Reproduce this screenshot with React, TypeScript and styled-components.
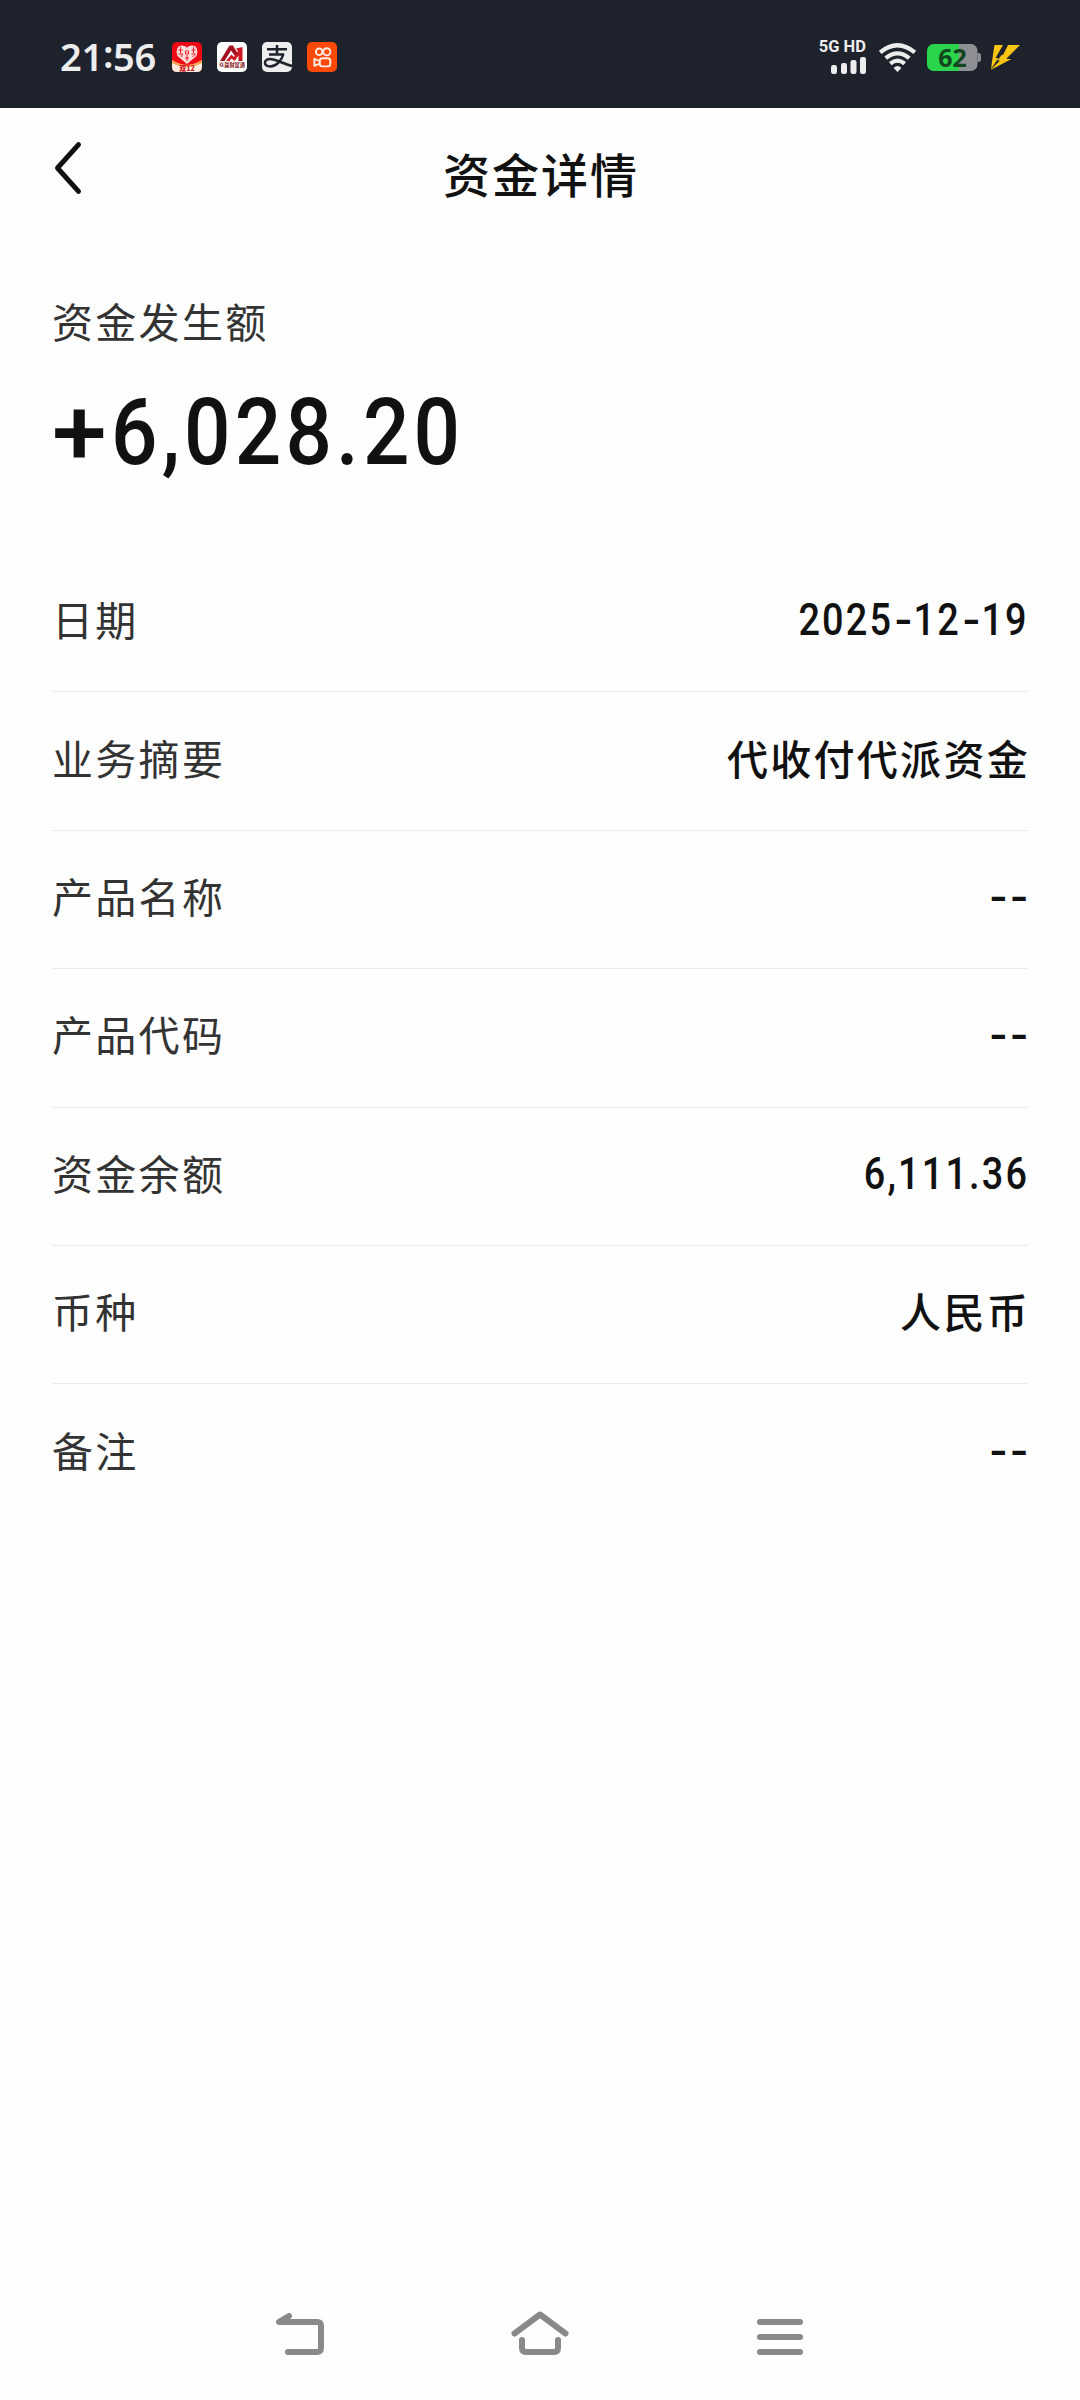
import React from 'react';
import styled, { createGlobalStyle } from 'styled-components';

const GlobalStyle = createGlobalStyle`
  * { box-sizing: border-box; }
  body { margin: 0; background: #fefefe; }
`;

const cjk = `'Noto Sans CJK SC', sans-serif`;
const digits = `Roboto, 'Noto Sans CJK SC', sans-serif`;

const Screen = styled.div`
  width: 1080px;
  height: 2400px;
  display: flex;
  flex-direction: column;
  background: #fefefe;
  color: #111;
  font-family: ${cjk};
  overflow: hidden;
`;

const StatusBar = styled.header`
  height: 108px;
  flex: none;
  display: flex;
  align-items: center;
  justify-content: space-between;
  padding: 6px 60px 0 60px;
  background: #1e222d;
`;

const StatusGroup = styled.div`
  display: flex;
  align-items: center;
  gap: 15px;
`;

const SystemGroup = styled.div`
  display: grid;
  grid-template-columns: 52px 39px 54px 30px;
  column-gap: 9px;
  align-items: center;
  justify-items: start;
`;

const Clock = styled.time`
  width: 97px;
  font: 600 38px/40px 'Noto Sans', sans-serif;
  letter-spacing: -0.3px;
  color: #ededed;
  white-space: nowrap;
  display: flex;
  padding-bottom: 2px;
`;

const Colon = styled.span`
  margin-top: -3px;
`;

const Icon = styled.svg`
  display: block;
  flex: none;
  overflow: visible;
`;

const Network = styled.div`
  display: flex;
  flex-direction: column;
  align-items: flex-end;
  gap: 3px;
  width: 48px;
`;

const NetworkLabel = styled.span`
  font: 700 16.5px/14px Roboto, sans-serif;
  color: #ededed;
  white-space: nowrap;
`;

const TitleBar = styled.div`
  flex: none;
  height: 142px;
  display: grid;
  grid-template-columns: 120px 1fr 120px;
  align-items: start;
`;

const BackButton = styled.button`
  border: 0;
  background: none;
  padding: 34px 0 0 54px;
`;

const Title = styled.h1`
  margin: 31px 0 0;
  text-align: center;
  font: 500 47px/68px ${cjk};
  letter-spacing: 2px;
  text-indent: 2px;
`;

const Summary = styled.section`
  flex: none;
  height: 304px;
  padding: 40px 52px 0;
`;

const Caption = styled.div`
  font-size: 41px;
  line-height: 60px;
  letter-spacing: 2.3px;
  color: #333;
`;

const Amount = styled.div`
  display: flex;
  margin-top: 28px;
  font: 500 93px/110px ${digits};
`;

const Sign = styled.span`
  width: 59px;
  transform: scaleX(1.06);
  transform-origin: left center;
`;

const AmountDigits = styled.span`
  letter-spacing: 4.7px;
  transform: scaleX(0.88);
  transform-origin: left center;
`;

const List = styled.dl`
  flex: 1;
  margin: 0;
  padding: 0 52px;
`;

const Row = styled.div`
  height: 138.4px;
  display: flex;
  align-items: center;
  justify-content: space-between;
  border-bottom: 1px solid #ebebeb;
  &:last-child { border-bottom: 0; }
`;

const Label = styled.dt`
  font-size: 41px;
  line-height: 60px;
  letter-spacing: 2.3px;
  color: #333;
  padding-bottom: 9px;
`;

const TextValue = styled.dd`
  margin: 0 -2px 0 0;
  font-weight: 500;
  font-size: 41px;
  line-height: 60px;
  letter-spacing: 2.3px;
  padding-bottom: 9px;
`;

const NumericValue = styled.dd`
  margin: 0 -1px 0 0;
  display: flex;
  font: 500 43.5px/60px ${digits};
  letter-spacing: 2.5px;
  padding-bottom: 3px;
  transform: scaleX(0.87);
  transform-origin: right center;
`;

const Dash = styled.span`
  width: 23.5px;
  letter-spacing: 0;
  text-align: center;
  transform: scaleX(1.35);
`;

const NavBar = styled.nav`
  flex: none;
  height: 130px;
  display: grid;
  grid-template-columns: repeat(3, 240px);
  justify-content: center;
  padding-top: 41px;
  justify-items: center;
`;

const rows: { label: string; value: string; numeric?: boolean }[] = [
  { label: '日期', value: '2025-12-19', numeric: true },
  { label: '业务摘要', value: '代收付代派资金' },
  { label: '产品名称', value: '--', numeric: true },
  { label: '产品代码', value: '--', numeric: true },
  { label: '资金余额', value: '6,111.36', numeric: true },
  { label: '币种', value: '人民币' },
  { label: '备注', value: '--', numeric: true },
];

// Dashes are set wider than the condensed figures around them.
const Figures = ({ value }: { value: string }) => (
  <NumericValue>
    {value.split(/(-)/).filter(Boolean).map((part, i) =>
      part === '-' ? <Dash key={i}>-</Dash> : <span key={i}>{part}</span>
    )}
  </NumericValue>
);

const SaleIcon = () => (
  <Icon width="30" height="30" viewBox="0 0 30 30">
    <rect width="30" height="30" rx="5" fill="#ee0a14" />
    <path d="M0 18 Q15 28 30 18 V25 Q30 30 25 30 H5 Q0 30 0 25Z" fill="#fdebe0" />
    <path d="M0 18 Q8 23 15 23 Q22 23 30 18 V21 Q22 25 15 25 Q8 25 0 21Z" fill="#f9a04e" />
    <path d="M15 22 L5.500 14 Q2.500 4 10 3.500 Q14 3.500 15 6 Q16 3.500 20 3.500 Q27.500 4 24.500 14Z" fill="#fbdcdc" />
    <path d="M6.500 8h4M8.500 5v6M6.500 12h4l-1 3M19.500 8h4M21.500 5v6M19.500 12h4l-3 3M13.500 9h3v3h-3zM15 13v6M13 16h4" stroke="#ee0a14" strokeWidth="0.900" fill="none" />
    <text x="15" y="28.600" textAnchor="middle" fontFamily={cjk} fontWeight="900" fontSize="7" fill="#d3121b">双12</text>
  </Icon>
);

const WealthIcon = () => (
  <Icon width="30" height="30" viewBox="0 0 30 30">
    <rect width="30" height="30" rx="5" fill="#fff" />
    <path d="M3 19 L12.500 3.500 H16 L20.500 11 L18 14 L14 8.500 L7.500 19Z" fill="#a3121c" />
    <path d="M9 19 L14.500 12.500 L17 15 L21 9 L19 6.500 L25.500 5 V19 H21.500 V13.500 L17.500 19 L14.500 16.500 L12.500 19Z" fill="#cc1722" />
    <text x="15" y="25.200" textAnchor="middle" fontFamily={cjk} fontWeight="700" fontSize="5.200" fill="#8c1a24">众赢财富通</text>
  </Icon>
);

const PayIcon = () => (
  <Icon width="30" height="30" viewBox="0 0 30 30">
    <rect width="30" height="30" rx="5" fill="#ededed" />
    <g fill="none" stroke="#1e222d" strokeLinecap="butt">
      <path d="M5 7.200H25M15 3V12.500M7 12.500H22" strokeWidth="2.500" />
      <path d="M21.500 12 C19.500 19 14 24.500 8 24.500 C1 24.500 1.500 17 8 17 C14 17 20 21.500 30 24" strokeWidth="2.500" />
    </g>
  </Icon>
);

const VideoIcon = () => (
  <Icon width="30" height="30" viewBox="0 0 30 30">
    <rect width="30" height="30" rx="5" fill="#ff4906" />
    <g fill="none" stroke="#fbeee6" strokeWidth="1.900" strokeLinejoin="round">
      <circle cx="12.200" cy="9.800" r="3.300" />
      <circle cx="19.800" cy="9.800" r="3.600" />
      <rect x="12.800" y="16.200" width="10.500" height="8.200" rx="2.600" />
      <path d="M12.500 19 L7.300 16.800 V23.800 L12.500 21.600" />
    </g>
  </Icon>
);

const SignalIcon = () => (
  <Icon width="35" height="17" viewBox="0 0 35 17" fill="#ededed">
    <rect x="0" y="8" width="6" height="9" rx="2.200" />
    <rect x="10" y="6" width="6" height="11" rx="2.200" />
    <rect x="19.500" y="3" width="6" height="14" rx="2.200" />
    <rect x="29" y="0" width="6" height="17" rx="2.200" />
  </Icon>
);

const WifiIcon = () => (
  <Icon width="37" height="29" viewBox="0 0 37 29" fill="none" stroke="#ededed" strokeWidth="4.200">
    <path d="M1.200 9.300 Q18.500 -4.800 35.800 9.300" />
    <path d="M6.700 15.200 Q18.500 5.400 30.300 15.200" />
    <path d="M11.300 20.600 Q18.500 14.600 25.700 20.600" />
    <path d="M14.600 25 Q18.500 21.200 22.400 25 L18.500 29Z" fill="#ededed" stroke="none" />
  </Icon>
);

const BatteryIcon = () => (
  <Icon width="54" height="27" viewBox="0 0 54 27">
    <path d="M32 0H44a6.500 6.500 0 0 1 6.500 6.500V20.500a6.500 6.500 0 0 1-6.500 6.500H32Z" fill="#8f9096" />
    <path d="M50.500 9h1a2.500 2.500 0 0 1 2.500 2.500v4a2.500 2.500 0 0 1-2.500 2.500h-1z" fill="#8f9096" />
    <path d="M32 0H6.500A6.500 6.500 0 0 0 0 6.500V20.500A6.500 6.500 0 0 0 6.500 27H32Z" fill="#2ad54b" />
    <text x="25.500" y="22.700" textAnchor="middle" fontFamily="'Noto Sans', sans-serif" fontWeight="700" fontSize="25" fill="#12461f">62</text>
  </Icon>
);

const ChargeIcon = () => (
  <Icon width="30" height="25" viewBox="0 0 30 25" fill="#f9c412">
    <path d="M4.500 0H13L5.500 13 H8.500 L1 24 L2.500 13 Z" />
    <path d="M18 0H30L17.500 12.500 L16.500 14 H21.500 L0.500 25 L10 15.500 H7.500 L11.500 10 H13Z" />
  </Icon>
);

export default function App() {
  return (
    <Screen>
      <GlobalStyle />
      <StatusBar>
        <StatusGroup>
          <Clock>21<Colon>:</Colon>56</Clock>
          <SaleIcon />
          <WealthIcon />
          <PayIcon />
          <VideoIcon />
        </StatusGroup>
        <SystemGroup>
          <Network>
            <NetworkLabel>5G HD</NetworkLabel>
            <SignalIcon />
          </Network>
          <WifiIcon />
          <BatteryIcon />
          <ChargeIcon />
        </SystemGroup>
      </StatusBar>
      <TitleBar>
        <BackButton aria-label="返回">
          <Icon width="28" height="52" viewBox="0 0 28 52" fill="none" stroke="#111" strokeWidth="5" strokeLinecap="round" strokeLinejoin="round">
            <path d="M24.500 2.700 L3.500 26 L24.500 49.300" />
          </Icon>
        </BackButton>
        <Title>资金详情</Title>
      </TitleBar>
      <Summary>
        <Caption>资金发生额</Caption>
        <Amount>
          <Sign>+</Sign>
          <AmountDigits>6,028.20</AmountDigits>
        </Amount>
      </Summary>
      <List>
        {rows.map((r) => (
          <Row key={r.label}>
            <Label>{r.label}</Label>
            {r.numeric ? <Figures value={r.value} /> : <TextValue>{r.value}</TextValue>}
          </Row>
        ))}
      </List>
      <NavBar>
        <Icon width="48" height="45" viewBox="276 2311 48 45" fill="none" stroke="#898989" strokeWidth="6" strokeLinecap="round" strokeLinejoin="round">
          <path d="M289 2316 L279 2322 H317 Q321 2322 321 2326 V2348 Q321 2352 317 2352 H288" />
        </Icon>
        <Icon width="58" height="45" viewBox="511 2311 58 45" fill="none" stroke="#898989" strokeWidth="6" strokeLinecap="round" strokeLinejoin="round">
          <path d="M514.500 2333.500 L540 2314.500 L565.500 2333.500 M522 2340 V2348 Q522 2352 526 2352 H554 Q558 2352 558 2348 V2340" />
        </Icon>
        <Icon width="46" height="45" viewBox="757 2311 46 45" fill="none" stroke="#898989" strokeWidth="6" strokeLinecap="round">
          <path d="M760 2322H800M760 2337H800M760 2352H800" />
        </Icon>
      </NavBar>
    </Screen>
  );
}
